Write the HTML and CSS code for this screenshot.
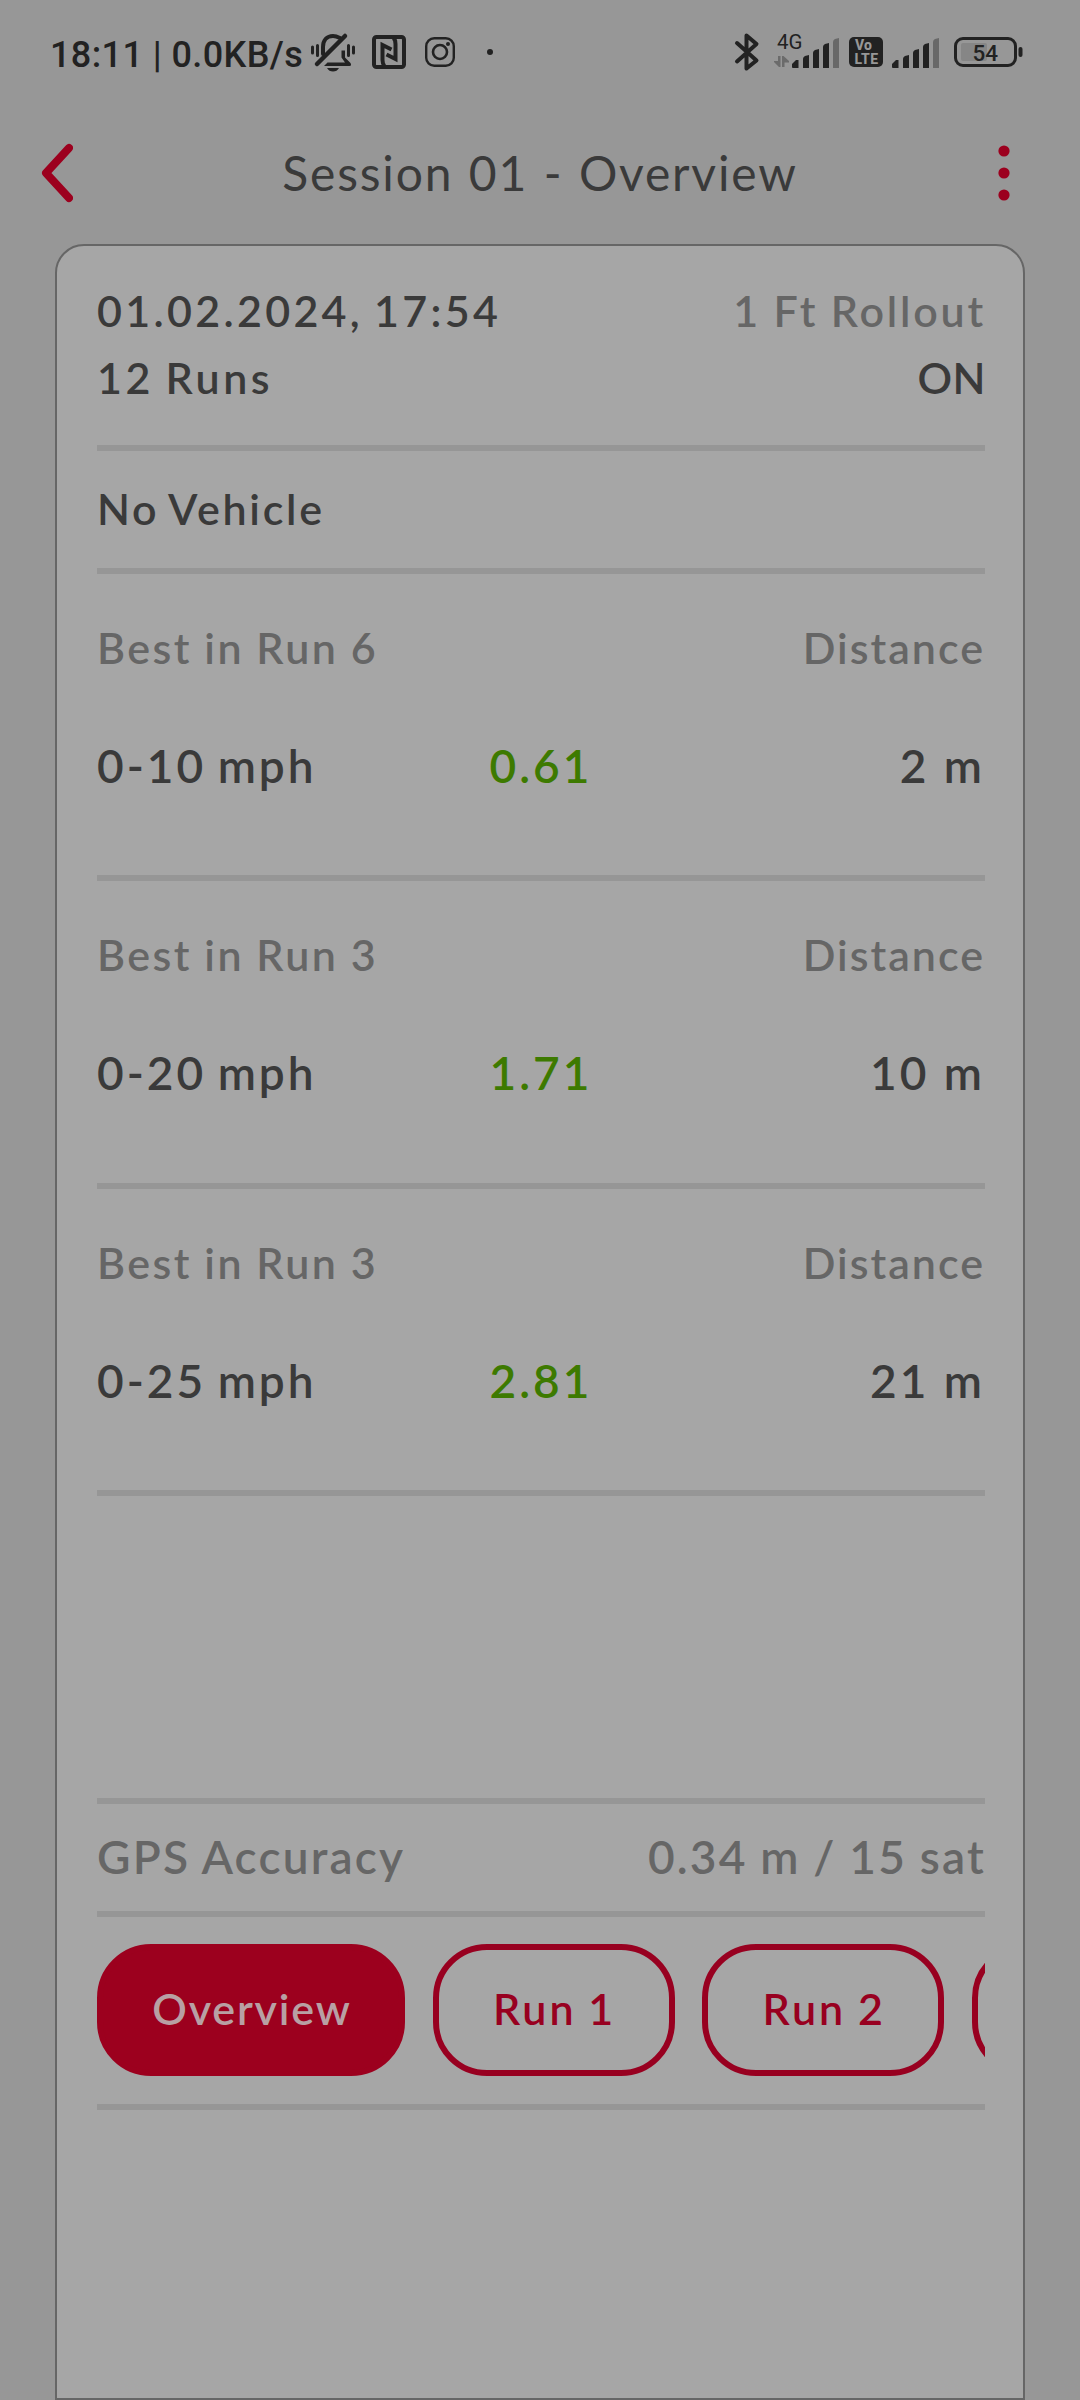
FILE: index.html
```html
<!DOCTYPE html>
<html lang="en">

<head>
    <meta charset="UTF-8">
    <meta name="viewport" content="width=device-width, initial-scale=1.0">
    <title>Session 01 - Overview</title>
    <link rel="stylesheet" href="styles.css">
</head>

<body>
    <div class="statusbar">
        <span class="clock">18:11 | 0.0KB/s</span>
        <svg class="bell" width="46" height="42" viewBox="310 31 46 42" fill="none" stroke="#222" stroke-linecap="round">
            <path d="M312.5 47v6M317.5 45.500v10M348.500 45.500v10M353.500 47v6" stroke-width="3" />
            <path d="M323 54v-7c0-7 4-11 10-11c3 0 5 1 7 2" stroke-width="4" />
            <path d="M345 36L317 64" stroke-width="4.500" />
            <path d="M341.500 50.500h3.500v7l5.500 5.500q1.500 3-1 3h-25.500l3.500-3.500h17.500l-3.500-5z" fill="#222" stroke="none" />
            <path d="M327 68h12q-2 3.500-6 3.500t-6-3.500z" fill="#222" stroke="none" />
        </svg>
        <svg class="nfc" width="34" height="34" viewBox="0 0 34 34" fill="none" stroke="#222">
            <rect x="2" y="2" width="30" height="30" rx="2.500" stroke-width="4" />
            <path d="M12.500 31q-2-2-2-6v-15l9 4.500M21.500 3q2 2 2 6v15l-9-4.500" stroke-width="4" />
        </svg>
        <svg class="insta" width="30" height="30" viewBox="0 0 30 30" fill="none" stroke="#222">
            <rect x="1.200" y="1.200" width="27.600" height="27.600" rx="8" stroke-width="2.400" />
            <circle cx="15" cy="15" r="7" stroke-width="2.600" />
            <circle cx="23" cy="7" r="2" fill="#222" stroke="none" />
        </svg>
        <span class="dot"></span>

        <div class="right">
            <svg class="bt" width="26" height="40" viewBox="0 0 26 40" fill="none" stroke="#222" stroke-width="4" stroke-linecap="round" stroke-linejoin="round">
                <path d="M3 11L22.500 28.500L12.500 36.500V3.500L22.500 12L3 29.500" />
            </svg>
            <svg class="signal" width="66" height="48" viewBox="774 28 66 48" fill="#222">
                <text class="net" x="777" y="49">4G</text>
                <path d="M778 56h2.500v11h-1.500l-5-5v-1h4zM784.500 67h-2.500v-11h1.500l5.500 5v1.500h-4.500z" fill="#6b6b6b" />
                <path d="M792 67v-3l4-4h2.500v8h-6zM803 68v-9q0-2 2-3l4-1v13zM813 68v-15q0-2 2-3l4-1v19zM823 68v-21q0-2 2-3l4-1v25z" />
                <path d="M833 68v-26q0-2 2-3l4-1v30z" fill="#686868" />
            </svg>
            <svg class="volte" width="34" height="38" viewBox="0 -4 34 38">
                <rect width="34" height="30" rx="5" fill="#222" />
                <text x="6" y="13" textLength="17">Vo</text>
                <text x="5.500" y="26.500" textLength="23.500">LTE</text>
            </svg>
            <svg class="signal2" width="48" height="36" viewBox="892 34 48 36" fill="#222">
                <path d="M892 67v-3l4-4h2.500v8h-6zM903 68v-9q0-2 2-3l4-1v13zM913 68v-15q0-2 2-3l4-1v19zM923 68v-21q0-2 2-3l4-1v25z" />
                <path d="M933 68v-26q0-2 2-3l4-1v30z" fill="#686868" />
            </svg>
            <svg class="battery" width="70" height="30" viewBox="0 0 70 30">
                <rect x="7" y="6" width="26" height="18" rx="2" fill="#868686" />
                <rect x="1.500" y="1.500" width="60" height="27" rx="7.500" fill="none" stroke="#222" stroke-width="3" />
                <rect x="64.500" y="10" width="4" height="10" rx="2" fill="#222" />
                <text x="18.500" y="24">54</text>
            </svg>
        </div>
    </div>

    <div class="header">
        <svg class="back" width="32" height="60" viewBox="0 0 32 60">
            <path d="M28 5L5 30L28 55" fill="none" stroke="#9c001e" stroke-width="8" stroke-linecap="round" stroke-linejoin="round" />
        </svg>
        <div class="title">Session 01 - Overview</div>
        <svg class="menu" width="12" height="58" viewBox="0 0 12 58" fill="#9c001e">
            <circle cx="6" cy="7" r="5.600" />
            <circle cx="6" cy="29" r="5.600" />
            <circle cx="6" cy="51" r="5.600" />
        </svg>
    </div>

    <div class="card">
        <div class="info">
            <div class="row">
                <span class="date">01.02.2024, 17:54</span>
                <span class="grey">1 Ft Rollout</span>
            </div>
            <div class="row">
                <span class="runs">12 Runs</span>
                <span class="on">ON</span>
            </div>
        </div>

        <div class="vehicle">No Vehicle</div>

        <div class="best">
            <div class="row grey"><span>Best in Run 6</span><span>Distance</span></div>
            <div class="values"><span>0-10 mph</span><span class="time">0.61</span><span class="dist">2 m</span></div>
        </div>
        <div class="best">
            <div class="row grey"><span>Best in Run 3</span><span>Distance</span></div>
            <div class="values"><span>0-20 mph</span><span class="time">1.71</span><span class="dist">10 m</span></div>
        </div>
        <div class="best">
            <div class="row grey"><span>Best in Run 3</span><span>Distance</span></div>
            <div class="values"><span>0-25 mph</span><span class="time">2.81</span><span class="dist">21 m</span></div>
        </div>

        <div class="empty"></div>

        <div class="row gps"><span>GPS Accuracy</span><span>0.34 m / 15 sat</span></div>

        <div class="tabs">
            <button class="button active">Overview</button>
            <button class="button">Run 1</button>
            <button class="button">Run 2</button>
            <button class="button"></button>
        </div>
    </div>
</body>

</html>
```
FILE: styles.css
```css
* {
    box-sizing: border-box;
}

body {
    margin: 0;
    height: 2400px;
    background-color: #979797;
    color: #3a3a3a;
    font-family: Lato, sans-serif;
    font-size: 43px;
    font-weight: 600;
    white-space: nowrap;
    overflow: hidden;
}

svg {
    display: block;
    flex: none;
}

/* Status bar */
.statusbar {
    height: 104px;
    padding: 0 56px 0 50px;
    display: flex;
    align-items: center;
    font-family: Roboto, sans-serif;
    font-weight: 500;
}

.clock {
    width: 260px;
    color: #222;
    font-size: 36px;
    letter-spacing: 0.4px;
    padding-top: 5px;
}

.nfc {
    margin-left: 16px;
}

.insta {
    margin-left: 19px;
}

.dot {
    width: 6px;
    height: 6px;
    margin-left: 32px;
    border-radius: 50%;
    background-color: #222;
}

.right {
    margin-left: auto;
    display: flex;
    align-items: center;
}

.signal {
    margin-left: 14px;
}

.net {
    font-size: 20.5px;
    font-weight: 400;
}

.volte {
    margin-left: 9px;
}

.volte text {
    font-size: 14px;
    font-weight: 800;
    fill: #979797;
}

.signal2 {
    margin-left: 9px;
}

.battery {
    margin-left: 14px;
}

.battery text {
    font-size: 22.5px;
    fill: #222;
}

/* Header */
.header {
    height: 140px;
    padding: 0 70px 2px 41px;
    display: flex;
    align-items: center;
    justify-content: space-between;
}

.title {
    margin: -1px 0 0 9px;
    font-size: 48px;
    font-weight: 400;
    letter-spacing: 1.8px;
    word-spacing: 1.5px;
}

/* Card */
.card {
    height: 2156px;
    margin: 0 55px;
    padding: 0 38px 0 40px;
    background-color: #a6a6a6;
    border: 2px solid #666;
    border-radius: 29px 29px 0 0;
    word-spacing: -3px;
}

.row {
    display: flex;
    justify-content: space-between;
}

.row span:last-child {
    margin-right: -1px;
}

.grey {
    color: #666;
    letter-spacing: 2.5px;
    word-spacing: -1px;
}

.info {
    height: 205px;
    padding-top: 31px;
    line-height: 67px;
    border-bottom: 6px solid #969696;
}

.date {
    letter-spacing: 3.3px;
}

.runs {
    letter-spacing: 3.6px;
}

.info .grey {
    letter-spacing: 2.8px;
}

.info .on {
    margin-right: 2px;
    letter-spacing: 0.5px;
}

.vehicle {
    height: 123px;
    line-height: 115px;
    letter-spacing: 2.7px;
    border-bottom: 6px solid #969696;
}

.best {
    height: 307.4px;
    padding-top: 44px;
    line-height: 60px;
    border-bottom: 6px solid #969696;
}

.best .grey span:last-child {
    margin-right: 0;
    letter-spacing: 2px;
}

.values {
    margin-top: 58px;
    display: grid;
    grid-template-columns: 1fr auto 1fr;
    font-size: 46px;
    letter-spacing: 3px;
}

.time {
    color: #3d7a00;
}

.dist {
    text-align: right;
    word-spacing: 0;
}

.empty {
    height: 308px;
    border-bottom: 6px solid #969696;
}

.gps {
    height: 113px;
    line-height: 105px;
    color: #666;
    font-size: 46px;
    letter-spacing: 2.2px;
    word-spacing: -1px;
    border-bottom: 6px solid #969696;
}

.tabs {
    height: 193px;
    padding: 27px 0 28px;
    display: flex;
    gap: 27.6px;
    overflow: hidden;
    border-bottom: 6px solid #969696;
}

.button {
    flex: none;
    width: 242px;
    height: 132px;
    padding: 0 0 3px 2px;
    background-color: transparent;
    color: #980020;
    border: 6px solid #980020;
    border-radius: 54px;
    font-family: inherit;
    font-size: 43px;
    font-weight: 600;
    letter-spacing: 3px;
    word-spacing: -2px;
}

.active {
    width: 308px;
    background-color: #9c001e;
    border-color: #9c001e;
    color: #b8a0a4;
    letter-spacing: 1.8px;
}
```
